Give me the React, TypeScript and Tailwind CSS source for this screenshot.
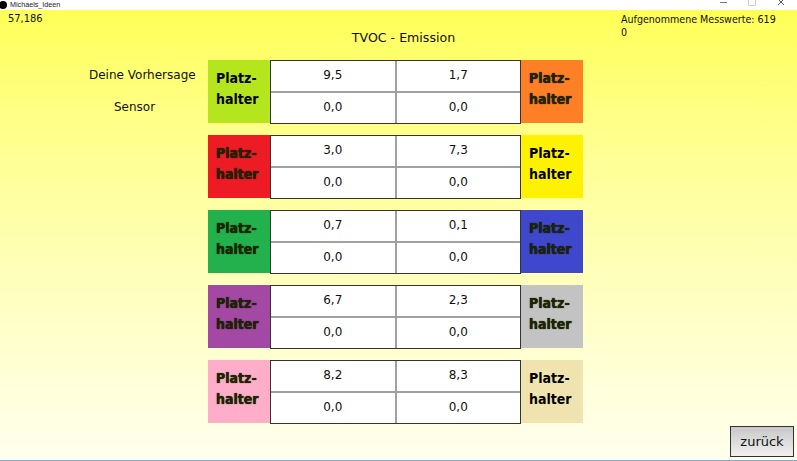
const rows = [
  { l: "bg-[#b5e61d]", r: "bg-[#ff7f27]", a: "9,5", b: "1,7" },
  { l: "bg-[#ed1c24]", r: "bg-[#fff200]", a: "3,0", b: "7,3" },
  { l: "bg-[#22b14c]", r: "bg-[#3f48cc]", a: "0,7", b: "0,1" },
  { l: "bg-[#a349a4]", r: "bg-[#c3c3c3]", a: "6,7", b: "2,3" },
  { l: "bg-[#ffaec9]", r: "bg-[#efe4b0]", a: "8,2", b: "8,3" },
];

function Block({ color, tint }: { color: string; tint: boolean }) {
  return (
    <div
      className={`${color} w-[62px] h-[63px] shrink-0 pl-2 pt-[8px] text-[14px] font-bold leading-[20.5px] font-['DejaVu_Sans_Condensed','DejaVu_Sans',sans-serif] ${
        tint ? "text-[#1c2600] [text-shadow:0_0_1px_#000]" : "text-black"
      }`}
    >
      Platz-
      <br />
      halter
    </div>
  );
}

function Cell({ children, right }: { children: string; right?: boolean }) {
  return (
    <div className={`flex-1 flex items-center justify-center bg-white pb-[3px] ${right ? "" : "border-r-2 border-[#a0a0a0]"}`}>
      {children}
    </div>
  );
}

export default function App() {
  return (
    <div className="w-[797px] h-[461px] flex flex-col overflow-hidden bg-white font-['DejaVu_Sans',sans-serif] text-[12px] text-[#111]">
      <div className="h-[10px] shrink-0 flex items-center bg-white text-[7.2px] leading-[10px] text-[#222] font-['Liberation_Sans',sans-serif]">
        <span className="w-[8px] h-[8px] rounded-full bg-black ml-[-1px] mr-[3px]" />
        <span className="flex-1">Michaels_Ideen</span>
        <svg width="75" height="10" viewBox="0 0 75 10" className="mr-[2px]" fill="none" stroke="#777" strokeWidth="1">
          <path d="M0 2.5H7" />
          <path d="M28.5 -1V5.5H35.5V-1" stroke="#ccc" />
          <path d="M58 -1L64 5M64 -1L58 5" stroke="#555" />
        </svg>
      </div>
      <div className="flex-1 flex flex-col bg-gradient-to-b from-[#ffff55] to-[#ffffee] border-b border-[#8aa5d0]">
        <div className="h-[50px] shrink-0 flex">
          <div className="w-[208px] pl-2 pt-[2px] text-[11px] leading-[14px] font-['DejaVu_Sans_Condensed','DejaVu_Sans',sans-serif]">57,186</div>
          <div className="w-[413px] pt-[19px] text-center text-[12.6px] leading-[18px] pr-[22px]">TVOC - Emission</div>
          <div className="pt-[3px] text-[10.6px] leading-[13px] whitespace-nowrap font-['DejaVu_Sans_Condensed','DejaVu_Sans',sans-serif]">
            Aufgenommene Messwerte: 619
            <br />0
          </div>
        </div>
        <div className="flex flex-col gap-[12px]">
          {rows.map((row, i) => (
            <div key={row.a} className="flex h-[63px]">
              <div className="w-[208px] shrink-0 flex flex-col items-start text-[12px] leading-[18px] pl-[89px] pt-[6px] gap-[14px]">
                {i === 0 && <span className="whitespace-nowrap">Deine Vorhersage</span>}
                {i === 0 && <span className="ml-[25px]">Sensor</span>}
              </div>
              <Block color={row.l} tint={i !== 0} />
              <div className="w-[251px] h-[64px] shrink-0 flex flex-col border border-[#333] text-[12px]">
                <div className="h-[32px] flex border-b-2 border-[#a0a0a0]">
                  <Cell>{row.a}</Cell>
                  <Cell right>{row.b}</Cell>
                </div>
                <div className="flex-1 flex">
                  <Cell>0,0</Cell>
                  <Cell right>0,0</Cell>
                </div>
              </div>
              <Block color={row.r} tint={i !== 1 && i !== 4} />
            </div>
          ))}
        </div>
        <div className="flex-1 flex items-end justify-end pr-[3px] pb-[3px]">
          <button className="w-[64px] h-[31px] border border-[#333] bg-gradient-to-b from-[#c8c8c8] to-[#f0f0f0] text-[13px] text-[#111]">
            zurück
          </button>
        </div>
      </div>
    </div>
  );
}
